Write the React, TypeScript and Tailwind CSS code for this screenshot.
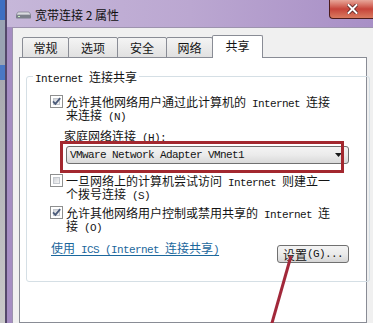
import type { ReactNode } from 'react';

const En = ({ children }: { children: ReactNode }) => (
  <span className="font-['Liberation_Mono',monospace] text-[11px] leading-[0px] tracking-[-0.6px]">{children}</span>
);

const CheckBox = ({ checked }: { checked?: boolean }) => (
  <div className="relative w-[13px] h-[13px] shrink-0 border border-[#8e8f8f] bg-white p-[2px]">
    <div className="w-full h-full border border-[#c4c8ce] bg-linear-to-br from-[#d0d3d8] to-[#f7f7f7]" />
    {checked && (
      <svg className="absolute left-0 top-0" width="11" height="11" viewBox="0 0 11 11">
        <path d="M2 5.3 L4.4 7.8 L9.2 2.2" fill="none" stroke="#4b5b7a" strokeWidth="1.8" />
      </svg>
    )}
  </div>
);

const Tab = ({ label, w, first }: { label: string; w: string; first?: boolean }) => (
  <div
    className={`${w} ${first ? '' : '-ml-px'} h-[21px] border border-[#898c95] rounded-t-[2px] bg-linear-to-b from-[#f4f4f4] to-[#e1e1e1] flex items-center justify-center leading-[14px]`}
  >
    {label}
  </div>
);

export default function App() {
  return (
    <div className="relative w-[373px] h-[323px] overflow-hidden flex bg-[#d6d6d6] font-['Noto_Sans_CJK_SC',sans-serif] text-[12px] text-[#141414]">
      {/* desktop strip */}
      <div className="w-[5px] shrink-0 flex flex-col">
        <div className="h-[20px] bg-[#3e6fc2]" />
        <div className="h-[45px] bg-[#9aa3b3]" />
        <div className="h-[15px] bg-[#4a78c4]" />
        <div className="flex-1 bg-linear-to-b from-[#a9aab0] to-[#c9c9c9]" />
      </div>

      {/* window */}
      <div className="flex-1 min-w-0 flex flex-col border-l-2 border-[#54486a] bg-[#a58dc2]">
        {/* title bar */}
        <div className="h-[27px] shrink-0 flex items-start bg-linear-to-r from-[#c6b7d9] via-[#bba7d1] to-[#a88fc6]">
          <div className="mt-[7px] ml-[9px] h-[16px] flex items-center">
            <svg width="15" height="8" viewBox="0 0 15 8">
              <path d="M2 1 H13 L15 4 H0 Z" fill="#d9dbe0" stroke="#6f7480" strokeWidth="0.6" />
              <rect x="0" y="4" width="15" height="3.5" rx="0.8" fill="#7b808b" />
              <rect x="2" y="5" width="2" height="1" fill="#c8f0c0" />
            </svg>
            <span className="ml-[4px] leading-[16px] text-[#101010]">宽带连接 2 属性</span>
          </div>
          <div className="ml-auto w-[44px] h-[19px] shrink-0 border border-t-0 border-r-0 border-[#4b1b1b] rounded-bl-[4px] bg-linear-to-b from-[#e7a69a] via-[#c6433a] to-[#d97a60] flex items-center justify-center pl-[2px]">
            <svg width="11" height="10" viewBox="0 0 11 10">
              <path d="M1.5 1 L9.5 9 M9.5 1 L1.5 9" stroke="#5a2020" strokeWidth="3.6" strokeLinecap="square" />
              <path d="M1.5 1 L9.5 9 M9.5 1 L1.5 9" stroke="#ffffff" strokeWidth="2" strokeLinecap="square" />
            </svg>
          </div>
        </div>

        {/* frame + client */}
        <div className="flex-1 flex pl-[5px]">
          <div className="flex-1 flex flex-col bg-[#f0f0f0] border-l border-t border-[#9d93ae] pl-[6px] pt-[7px]">
            {/* tabs */}
            <div className="h-[23px] -mb-px flex items-end ml-[3px]">
              <Tab label="常规" w="w-[47px]" first />
              <Tab label="选项" w="w-[50px]" />
              <Tab label="安全" w="w-[50px]" />
              <Tab label="网络" w="w-[47px]" />
              <div className="relative z-10 -ml-px w-[51px] h-[23px] border border-b-0 border-[#898c95] rounded-t-[2px] bg-white flex items-start justify-center pt-[3px] leading-[14px]">
                共享
              </div>
            </div>

            {/* tab panel */}
            <div className="w-[348px] flex-1 bg-white border border-[#898c95] pl-[6px] pt-[12px]">
              <fieldset className="w-[335px] h-[212px] border border-[#d5dfe5] rounded-[3px]">
                <legend className="ml-[6px] px-[2px] leading-[13px]">
                  <En>Internet </En>连接共享
                </legend>

                <div className="flex flex-col pt-[12px] pl-[23px] pr-[20px] leading-[13px]">
                  <div className="flex gap-[3px]">
                    <CheckBox checked />
                    <div className="whitespace-nowrap">
                      允许其他网络用户通过此计算机的<En>{' Internet '}</En>连接
                      <br />
                      来连接<En>{' (N)'}</En>
                    </div>
                  </div>

                  <div className="mt-[8px] ml-[14px] whitespace-nowrap">
                    家庭网络连接<En>{' (H):'}</En>
                  </div>

                  <div className="mt-[4px] ml-[16px] w-[283px] h-[18px] border border-[#707070] rounded-[3px] bg-linear-to-b from-[#f4f4f4] via-[#ebebeb] to-[#d9d9d9] flex items-center pl-[3px] pr-[6px]">
                    <En>VMware Network Adapter VMnet1</En>
                    <svg className="ml-auto" width="7" height="4" viewBox="0 0 7 4">
                      <path d="M0 0 H7 L3.5 4 Z" fill="#1a1a1a" />
                    </svg>
                  </div>

                  <div className="mt-[10px] flex gap-[3px]">
                    <CheckBox />
                    <div className="whitespace-nowrap">
                      一旦网络上的计算机尝试访问<En>{' Internet '}</En>则建立一
                      <br />
                      个拨号连接<En>{' (S)'}</En>
                    </div>
                  </div>

                  <div className="mt-[6px] flex gap-[3px]">
                    <CheckBox checked />
                    <div className="whitespace-nowrap">
                      允许其他网络用户控制或禁用共享的<En>{' Internet '}</En>连
                      <br />
                      接<En>{' (O)'}</En>
                    </div>
                  </div>

                  <div className="mt-[9px] flex items-start">
                    <span className="ml-[1px] text-[#1b679c] underline underline-offset-[2px] whitespace-nowrap">
                      使用<En>{' ICS (Internet '}</En>连接共享<En>)</En>
                    </span>
                    <div className="ml-auto mt-[4px] w-[72px] h-[18px] border border-[#707070] rounded-[3px] bg-linear-to-b from-[#f4f4f4] via-[#ebebeb] to-[#d6d6d6] flex items-center justify-center whitespace-nowrap">
                      设置<En>{' (G)...'}</En>
                    </div>
                  </div>
                </div>
              </fieldset>
            </div>
          </div>
        </div>
      </div>

      {/* red annotations */}
      <div className="absolute left-[60px] top-[141px] w-[284px] h-[32px] border-[3px] border-[#a3282f]" />
      <svg className="absolute left-0 top-0 pointer-events-none" width="373" height="323" viewBox="0 0 373 323">
        <line x1="291" y1="256" x2="270" y2="330" stroke="#a2283a" strokeWidth="3" />
      </svg>
    </div>
  );
}
